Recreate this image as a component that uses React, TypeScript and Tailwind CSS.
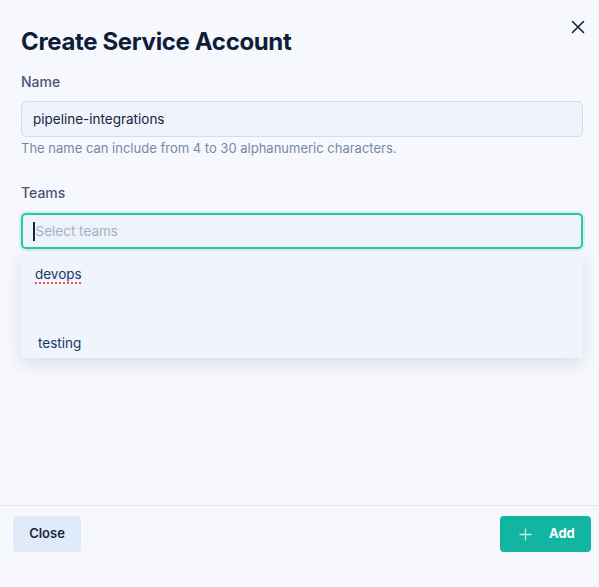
import React from "react";

export default function App() {
  return (
    <div
      className="relative flex h-[587px] w-[599px] flex-col overflow-hidden bg-[#f6f8fd]"
      style={{ fontFamily: "Inter, 'Noto Sans', sans-serif" }}
    >
      <button className="absolute right-[13px] top-[19px] flex h-[16px] w-[16px] items-center justify-center text-[#16233a]">
        <svg width="14" height="14" viewBox="0 0 14 14" fill="none" stroke="currentColor" strokeWidth="1.6" strokeLinecap="round">
          <path d="M1.5 1.5L12.5 12.5M12.5 1.5L1.5 12.5" />
        </svg>
      </button>

      <div className="flex flex-1 flex-col pl-[21px] pr-[16px] pt-[26px]">
        <h1 className="text-[24px] font-bold leading-[32px] tracking-[-0.35px] text-[#0f1e38]">
          Create Service Account
        </h1>

        <label className="mt-[14px] text-[14px] font-medium leading-[20px] text-[#4c5477]">Name</label>
        <div className="mt-[9px] flex h-[36px] items-center rounded-[5px] border border-[#d3ddee] bg-[#eef3fc] px-[11px] text-[13.5px] text-[#19243d]">
          pipeline-integrations
        </div>
        <p className="mt-[1px] text-[13px] leading-[20px] text-[#7888a3]">
          The name can include from 4 to 30 alphanumeric characters.
        </p>

        <label className="mt-[25px] text-[14px] font-medium leading-[20px] text-[#4c5477]">Teams</label>
        <div className="relative mt-[10px]">
          <div className="flex h-[36px] items-center rounded-[5px] border-2 border-[#2cc7a8] bg-[#edf2fb] px-[10px] text-[13.5px] shadow-[0_0_0_2px_rgba(44,199,168,0.18)]">
            <span className="mr-[1px] h-[19px] w-[1.5px] bg-[#1a2540]" />
            <span className="text-[#a3b1c6]">Select teams</span>
          </div>
          <div className="absolute left-0 right-0 top-[40px] h-[105px] bg-[#eff4fd] shadow-[0_6px_16px_rgba(30,40,80,0.12)]">
            <div className="flex h-[42px] items-center px-[14px] text-[13.5px] text-[#1c3766]">
              <span className="underline decoration-[#f0504a] decoration-dotted decoration-[1.5px] underline-offset-[4px]">devops</span>
            </div>
            <div className="h-[33px]" />
            <div className="flex h-[30px] items-center px-[17px] text-[13.5px] text-[#1c3766]">testing</div>
          </div>
        </div>
      </div>

      <div className="flex items-start justify-between border-t border-[#e0e7f3] px-[8px] pb-[35px] pl-[13px] pt-[10px]">
        <button className="flex h-[36px] w-[68px] items-center justify-center rounded-[4px] bg-[#e0eaf8] text-[13px] font-semibold text-[#17253f]">
          Close
        </button>
        <button className="flex h-[36px] w-[91px] items-center rounded-[4px] bg-[#12b5a2] pl-[19px] text-[13px] font-bold text-white">
          <svg width="13" height="13" viewBox="0 0 13 13" fill="none" stroke="rgba(255,255,255,0.75)" strokeWidth="1.3">
            <path d="M6.5 0.5V12.5M0.5 6.5H12.5" />
          </svg>
          <span className="ml-[17px]">Add</span>
        </button>
      </div>
    </div>
  );
}
